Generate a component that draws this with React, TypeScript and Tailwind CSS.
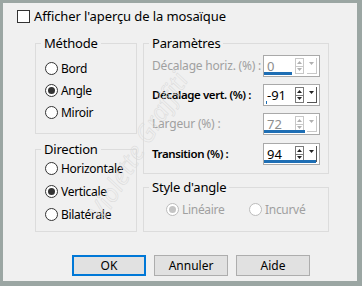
import React from 'react';

const font = { fontFamily: '"Noto Sans", "Open Sans", sans-serif' };

function Radio({ label, checked = false, disabled = false, className = '' }: { label: string; checked?: boolean; disabled?: boolean; className?: string }) {
  return (
    <div className={`flex items-center h-[13px] ${className}`}>
      <span
        className={`shrink-0 w-[13px] h-[13px] rounded-full border flex items-center justify-center bg-white ${
          disabled ? 'border-[#bcbcbc]' : 'border-[#333333]'
        }`}
      >
        {checked && <span className={`w-[7px] h-[7px] rounded-full ${disabled ? 'bg-[#c4c4c4]' : 'bg-[#333333]'}`} />}
      </span>
      <span
        className={`ml-[3px] text-[12px] tracking-[-0.3px] leading-none whitespace-nowrap ${
          disabled ? 'text-[#a0a0a0]' : 'text-black'
        }`}
      >
        {label}
      </span>
    </div>
  );
}

function Group({ title, className, children }: { title: string; className: string; children?: React.ReactNode }) {
  return (
    <div className={`relative border border-[#dcdcdc] ${className}`}>
      <span className="absolute -top-[9px] left-[5px] px-[3px] bg-[#f0f0f0] text-[13px] tracking-[-0.2px] leading-[16px] text-black whitespace-nowrap">
        {title}
      </span>
      {children}
    </div>
  );
}

function Arrow({ up = false, disabled = false }: { up?: boolean; disabled?: boolean }) {
  return (
    <svg width="5" height="3" viewBox="0 0 5 3">
      <path d={up ? 'M0 3 L2.5 0 L5 3 Z' : 'M0 0 L2.5 3 L5 0 Z'} fill={disabled ? '#b0b0b0' : '#222'} />
    </svg>
  );
}

function Spin({ value, disabled = false, bar }: { value: string; disabled?: boolean; bar: number }) {
  return (
    <div className="relative shrink-0 w-[57px] h-[22px] border border-[#a9a9a9] bg-white flex items-center">
      <span className={`pl-[3px] text-[13px] leading-none w-[31px] ${disabled ? 'text-[#8d8d8d]' : 'text-black'}`}>{value}</span>
      <div className={`flex flex-col w-[9px] h-[16px] border ${disabled ? 'border-[#c8c8c8]' : 'border-[#7a7a7a]'}`}>
        <div className={`flex-1 flex items-center justify-center border-b ${disabled ? 'border-[#c8c8c8]' : 'border-[#7a7a7a]'}`}>
          <Arrow up disabled={disabled} />
        </div>
        <div className="flex-1 flex items-center justify-center">
          <Arrow disabled={disabled} />
        </div>
      </div>
      <div
        className={`ml-[3px] w-[10px] h-[16px] flex items-start justify-center pt-[4px] border-r border-b ${
          disabled ? 'border-[#c8c8c8]' : 'border-[#555555]'
        }`}
      >
        <Arrow disabled={disabled} />
      </div>
      {bar > 0 && <div className="absolute left-0 bottom-[1px] h-[3px] bg-[#1e6eb4]" style={{ width: bar }} />}
      {bar === 0 && <div className="absolute left-[2px] bottom-[1px] h-[3px] w-[1px] bg-[#1e6eb4]" />}
    </div>
  );
}

function Row({ label, children, disabled = false, bold = false }: { label: string; children: React.ReactNode; disabled?: boolean; bold?: boolean }) {
  return (
    <div className="flex items-center justify-between">
      <span
        className={`leading-none whitespace-nowrap ${disabled ? 'text-[#a0a0a0] tracking-[-0.2px]' : 'text-black'} ${
          bold ? 'text-[11.5px] font-semibold tracking-[-0.4px]' : 'text-[12px]'
        }`}
      >
        {label}
      </span>
      {children}
    </div>
  );
}

function Button({ label, focused = false }: { label: string; focused?: boolean }) {
  return (
    <div
      className={`w-[74px] h-[21px] flex items-center justify-center bg-[#e1e1e1] text-[12px] text-black ${
        focused ? 'border-2 border-[#0078d7]' : 'border border-[#adadad]'
      }`}
    >
      {label}
    </div>
  );
}

export default function App() {
  return (
    <div
      style={font}
      className="w-[362px] h-[286px] bg-[#f0f0f0] border-l-[3px] border-t-[3px] border-r-[5px] border-b-[5px] border-[#9ba6a3] relative overflow-hidden"
    >
      {/* Checkbox */}
      <div className="flex items-center pl-[14px] pt-[7px]">
        <span className="w-[13px] h-[13px] border border-[#333333] bg-white" />
        <span className="ml-[4px] text-[13px] tracking-[-0.1px] leading-none text-black">Afficher l'aperçu de la mosaïque</span>
      </div>

      <div className="flex pl-[32px] pt-[20px] gap-[6px]">
        {/* Left column */}
        <div className="flex flex-col w-[102px]">
          <Group title="Méthode" className="h-[91px] pt-[18px] pl-[9px] flex flex-col gap-[9px]">
            <Radio label="Bord" />
            <Radio label="Angle" checked />
            <Radio label="Miroir" />
          </Group>
          <Group title="Direction" className="mt-[15px] h-[83px] pt-[12px] pl-[9px] flex flex-col gap-[10px]">
            <Radio label="Horizontale" />
            <Radio label="Verticale" checked />
            <Radio label="Bilatérale" />
          </Group>
        </div>

        {/* Right column */}
        <div className="flex flex-col w-[186px]">
          <Group title="Paramètres" className="h-[131px] pt-[11px] pl-[8px] pr-[8px] flex flex-col gap-[7px]">
            <Row label="Décalage horiz. (%) :" disabled>
              <Spin value="0" disabled bar={28} />
            </Row>
            <Row label="Décalage vert. (%) :" bold>
              <Spin value="-91" bar={0} />
            </Row>
            <Row label="Largeur (%) :" disabled>
              <Spin value="72" disabled bar={41} />
            </Row>
            <div className="mt-[1px]">
              <Row label="Transition (%) :" bold>
                <Spin value="94" bar={52} />
              </Row>
            </div>
          </Group>
          <Group title="Style d'angle" className="mt-[13px] h-[45px] pt-[15px] pl-[22px] flex">
            <Radio label="Linéaire" checked disabled className="w-[83px]" />
            <Radio label="Incurvé" disabled />
          </Group>
        </div>
      </div>

      {/* Buttons */}
      <div className="flex pl-[69px] pt-[23px] gap-[8px]">
        <Button label="OK" focused />
        <Button label="Annuler" />
        <Button label="Aide" />
      </div>

      {/* Watermark */}
      <div className="pointer-events-none absolute left-[52px] top-[124px] -rotate-[59deg] text-[25px] italic text-transparent [-webkit-text-stroke:0.5px_#d9d9d9] whitespace-nowrap">
        Violette Graffiti
      </div>
    </div>
  );
}
